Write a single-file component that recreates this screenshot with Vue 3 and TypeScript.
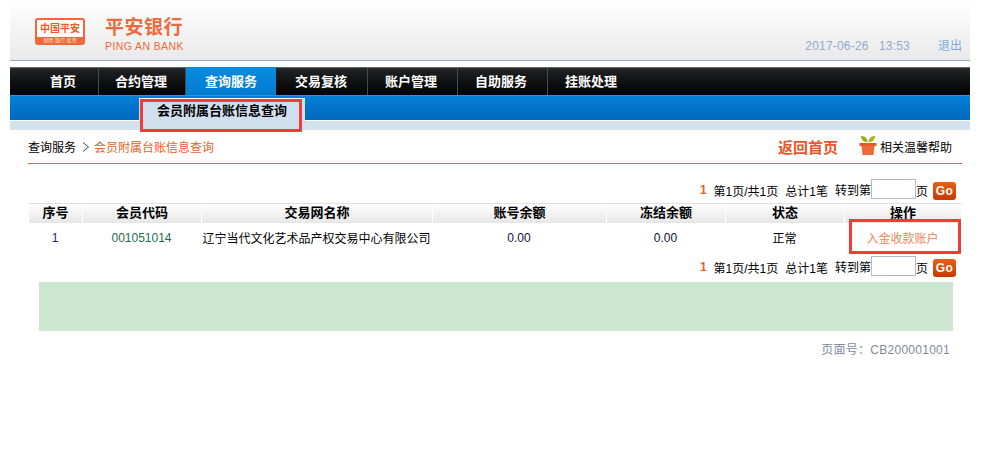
<script setup lang="ts">
const navItems = ['首页', '合约管理', '查询服务', '交易复核', '账户管理', '自助服务', '挂账处理']
const widths = [89, 87, 90, 92, 90, 90, 90]
const pads = [40, 16, 19, 19, 17, 17, 17]
const columns = [
  { label: '序号', width: 54 }, { label: '会员代码', width: 119 }, { label: '交易网名称', width: 231 },
  { label: '账号余额', width: 174 }, { label: '冻结余额', width: 119 }, { label: '状态', width: 119 }, { label: '操作', width: 117 },
]
</script>

<template>
  <div class="page">
    <header class="top">
      <div class="logo">
        <div class="badge"><span class="badge-name">中国平安</span><span class="badge-sub">保险·银行·投资</span></div>
        <div class="brand"><span class="brand-cn">平安银行</span><span class="brand-en">PING AN BANK</span></div>
      </div>
      <div class="top-right"><span class="date">2017-06-26&nbsp;&nbsp;13:53</span><a class="logout">退出</a></div>
    </header>
    <nav class="nav">
      <a v-for="(item, i) in navItems" :key="item" class="nav-item" :class="{ active: i === 2, last: i === 6 }" :style="{ width: widths[i] + 'px', paddingLeft: pads[i] + 'px' }">{{ item }}</a>
    </nav>
    <div class="subnav"><div class="subtab">会员附属台账信息查询</div></div>
    <div class="band"></div>
    <div class="annot annot-sub"></div>

    <div class="crumbs">
      <div class="crumb-left"><span>查询服务</span><svg class="chev" width="8" height="10" viewBox="0 0 8 10"><path d="M1 0.5 L6.5 5 L1 9.5" fill="none" stroke="#444" stroke-width="1"/></svg><span class="crumb-now">会员附属台账信息查询</span></div>
      <div class="crumb-right">
        <a class="back">返回首页</a>
        <svg class="pot" width="18" height="21" viewBox="0 0 18 21">
          <path d="M8.5 7 C8 3 6 1 2 1 C2 5 5 7 8.5 7Z" fill="#9aa81e"/><path d="M9.5 7 C10 3 12 1 16 1 C16 5 13 7 9.5 7Z" fill="#a8b21c"/>
          <rect x="8.2" y="4" width="1.6" height="4" fill="#dfe6b0"/><rect x="0.5" y="8" width="17" height="3" fill="#e85a24"/>
          <path d="M2.5 11 H15.5 L14.5 20 H3.5Z" fill="#ee6a3a"/>
        </svg>
        <a class="help">相关温馨帮助</a>
      </div>
    </div>

    <div class="pager pager-top">
      <b class="num">1</b><span>第1页/共1页</span><span>总计1笔</span><span class="jump">转到第<input class="page-input" aria-label="页码" /></span><span class="ye">页</span><button class="go">Go</button>
    </div>
    <div class="table">
      <div class="thead"><div v-for="c in columns" :key="c.label" class="th" :style="{ width: c.width + 'px' }">{{ c.label }}</div></div>
      <div class="tr">
        <div class="td idx" :style="{ width: columns[0].width + 'px' }">1</div>
        <div class="td code" :style="{ width: columns[1].width + 'px' }">001051014</div>
        <div class="td" :style="{ width: columns[2].width + 'px' }">辽宁当代文化艺术品产权交易中心有限公司</div>
        <div class="td amt" :style="{ width: columns[3].width + 'px' }">0.00</div>
        <div class="td amt" :style="{ width: columns[4].width + 'px' }">0.00</div>
        <div class="td" :style="{ width: columns[5].width + 'px' }">正常</div>
        <div class="td op" :style="{ width: columns[6].width + 'px' }">入金收款账户</div>
      </div>
      <div class="annot annot-op"></div>
    </div>
    <div class="pager pager-bottom">
      <b class="num">1</b><span>第1页/共1页</span><span>总计1笔</span><span class="jump">转到第<input class="page-input" aria-label="页码" /></span><span class="ye">页</span><button class="go">Go</button>
    </div>
    <div class="green"></div>
    <div class="page-code">页面号：CB200001001</div>
  </div>
</template>

<style scoped>
.page { position: relative; width: 960px; height: 459px; margin-left: 10px; font-family: "Liberation Sans", Arial, "Noto Sans CJK SC", sans-serif; font-size: 12px; color: #000; background: #fff; overflow: hidden; }
.top { height: 60px; border-bottom: 1px solid #8fa9cf; background: linear-gradient(#fff, #e9e9e9); display: flex; justify-content: space-between; }
.logo { display: flex; padding: 18px 0 0 25px; gap: 20px; align-items: flex-start; }
.badge { width: 50px; height: 27px; box-sizing: border-box; border: 2px solid #f0683a; border-radius: 3px; background: #fff; display: flex; flex-direction: column; overflow: hidden; }
.badge-name { height: 17px; line-height: 17px; text-align: center; color: #ee5a24; font-size: 10px; font-weight: 700; white-space: nowrap; }
.badge-sub { flex: 1; background: #f0683a; color: #fde0d4; font-size: 5px; line-height: 6px; text-align: center; white-space: nowrap; }
.brand { display: flex; flex-direction: column; }
.brand-cn { color: #ef6a3c; font-size: 19px; line-height: 20px; font-weight: 700; letter-spacing: 0.5px; white-space: nowrap; }
.brand-en { color: #ef6a3c; font-size: 10.5px; line-height: 12px; margin-top: 2px; letter-spacing: 0.4px; white-space: nowrap; }
.top-right { display: flex; align-items: flex-end; padding: 0 8px 6px 0; color: #8fa9cf; font-size: 12px; line-height: 16px; }
.date { margin-right: 28px; letter-spacing: 0.2px; word-spacing: 1.6px; white-space: pre; }
.logout { color: #7dabdc; }
.nav { margin-top: 6px; height: 27px; display: flex; background: linear-gradient(#2a2c30 0, #1d1f22 3px, #000 100%); border-top: 1px solid #666; }
.nav-item { box-sizing: border-box; height: 27px; line-height: 27px; color: #fff; font-weight: 700; font-size: 13px; white-space: nowrap; border-right: 1px solid #4a4a4a; }
.nav-item.last { border-right: 0; }
.nav-item.active { height: 29px; margin-top: -1px; line-height: 29px; background: linear-gradient(#058ee0, #0379d0); border-right: 0; }
.subnav { height: 24px; background: linear-gradient(#0580d8, #0068bd); border-top: 1px solid #2a95e0; border-bottom: 1px solid #fff; position: relative; }
.subtab { position: absolute; left: 129px; top: 2px; width: 166px; height: 32px; background: #cfdfee; border-top: 1px solid #fff; box-sizing: border-box; text-align: center; font-weight: 700; font-size: 13px; line-height: 23px; z-index: 1; }
.band { height: 9px; background: #d2e1ee; }
.annot { position: absolute; box-sizing: border-box; border: 3px solid #f53a3a; z-index: 2; pointer-events: none; }
.annot-sub { left: 130px; top: 99px; width: 162px; height: 33px; }
.crumbs { margin: 0 8px 0 18px; height: 34px; border-bottom: 1px solid #e8623a; display: flex; justify-content: space-between; align-items: center; box-sizing: border-box; }
.crumb-left { display: flex; align-items: center; font-size: 12px; }
.chev { margin: 0 4px 0 6px; }
.crumb-now { color: #e8622a; }
.crumb-right { display: flex; align-items: center; margin-right: 10px; }
.back { color: #e8562a; font-weight: 700; font-size: 15px; margin-right: 21px; }
.pot { margin-right: 3px; margin-top: -3px; }
.help { font-size: 12px; }
.pager { display: flex; justify-content: flex-end; align-items: center; height: 20px; padding-right: 14px; font-size: 12px; white-space: nowrap; }
.pager-top { margin-top: 15px; }
.pager > span { margin-left: 7px; padding-top: 2px; }
.pager .ye { margin-left: 0; }
.num { color: #e8622a; font-size: 12px; padding-top: 2px; }
.jump { display: inline-flex; align-items: center; padding-top: 0 !important; }
.page-input { width: 45px; height: 20px; box-sizing: border-box; border: 1px solid #aebccb; background: #fff; padding: 0; margin: 0; }
.go { width: 23px; height: 18px; margin: 3px 0 0 5px; padding: 0; border: 0; border-radius: 3px; background: linear-gradient(#ec5f14, #c63a00); color: #fff; font: 700 12px "Liberation Sans", sans-serif; letter-spacing: 0.5px; }
.table { position: relative; margin: 4px 8px 0 19px; }
.thead { display: flex; height: 20px; border-top: 1px solid #e0e0e0; box-sizing: border-box; }
.th { box-sizing: border-box; height: 19px; line-height: 17px; text-align: center; font-weight: 700; font-size: 13px; background: linear-gradient(#fff, #e6e6e6); border-right: 1px solid #fff; }
.tr { display: flex; height: 33px; align-items: center; }
.td { box-sizing: border-box; padding-right: 2px; text-align: center; white-space: nowrap; font-size: 12px; margin-top: -4px; }
.idx { color: #2a1a7a; }
.code { color: #1f6b54; }
.amt { color: #111133; }
.op { color: #f0855a; }
.annot-op { left: 820px; top: 16px; width: 112px; height: 35px; }
.green { margin: 6px 17px 0 29px; height: 49px; background: #cce6cf; }
.page-code { margin-top: 11px; padding-right: 20px; text-align: right; color: #808a9a; font-size: 12px; line-height: 16px; letter-spacing: 0.27px; }
</style>
